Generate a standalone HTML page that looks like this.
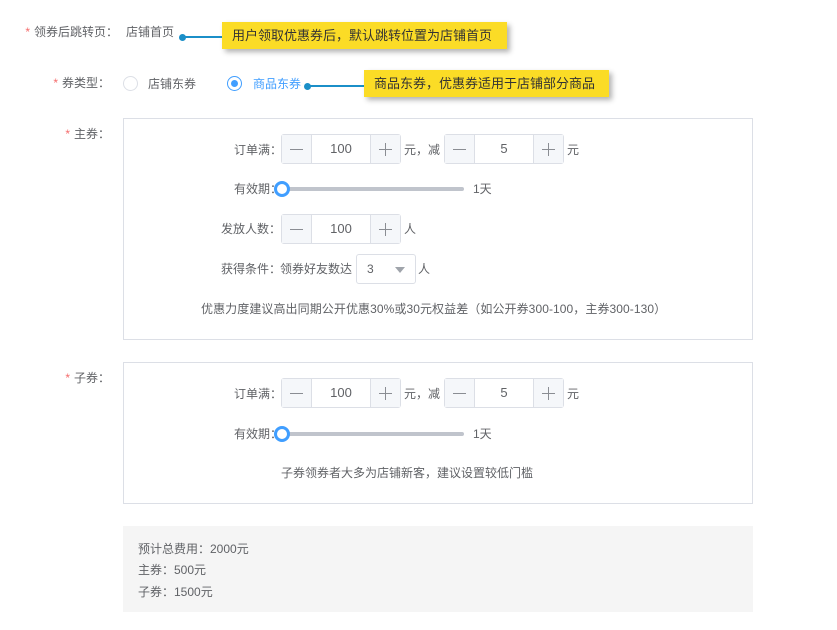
<!DOCTYPE html>
<html><head><meta charset="utf-8"><style>
*{margin:0;padding:0;box-sizing:border-box}
body{width:837px;height:630px;background:#fff;position:relative;overflow:hidden;font-family:"Liberation Sans","Noto Sans CJK SC",sans-serif;font-size:12px;color:#606266}
.a{position:absolute;white-space:nowrap;line-height:16px}
.r{text-align:right}
.s{color:#f56c6c;margin-right:4px}
.box{position:absolute;border:1px solid #dcdfe6;background:#fff}
.tip{position:absolute;background:#fbdc26;color:#333;font-size:13px;line-height:27px;padding-left:10px;box-shadow:3px 3px 5px rgba(0,0,0,.3)}
.dot{position:absolute;width:7px;height:7px;border-radius:50%;background:#1b8fc8}
.ln{position:absolute;height:2px;background:#1b8fc8}
.st{position:absolute;width:120px;height:30px;border:1px solid #dcdfe6;border-radius:3px;background:#fff}
.st .b{position:absolute;top:0;width:30px;height:28px;background:#f5f7fa}
.st .b.l{left:0;border-right:1px solid #dcdfe6}
.st .b.rr{right:0;border-left:1px solid #dcdfe6}
.st .b:before{content:"";position:absolute;left:8px;top:14px;width:13px;height:1px;background:#8a8d93}
.st .b.rr:after{content:"";position:absolute;left:14px;top:8px;width:1px;height:13px;background:#8a8d93}
.st .v{position:absolute;left:30px;right:30px;top:0;line-height:28px;text-align:center;color:#606266;font-size:13px}
.trk{position:absolute;height:4px;background:#c0c4cc;border-radius:2px}
.kn{position:absolute;width:16px;height:16px;border:3px solid #409eff;border-radius:50%;background:#fff}
</style></head><body>
<div class="a r" style="right:725px;top:24px;right:719px"><span class="s">*</span>领券后跳转页：</div>
<div class="a" style="left:126px;top:24px">店铺首页</div>
<div class="dot" style="left:179px;top:34px"></div><div class="ln" style="left:182px;top:36px;width:42px"></div>
<div class="tip" style="left:222px;top:22px;width:285px">用户领取优惠券后，默认跳转位置为店铺首页</div>

<div class="a r" style="right:727px;top:75px"><span class="s">*</span>券类型：</div>
<div style="position:absolute;left:123px;top:76px;width:15px;height:15px;border:1px solid #dcdfe6;border-radius:50%"></div>
<div class="a" style="left:148px;top:76px">店铺东券</div>
<div style="position:absolute;left:227px;top:76px;width:15px;height:15px;border:1px solid #409eff;border-radius:50%"><div style="position:absolute;left:3px;top:3px;width:7px;height:7px;border-radius:50%;background:#409eff"></div></div>
<div class="a" style="left:253px;top:76px;color:#409eff">商品东券</div>
<div class="dot" style="left:304px;top:83px"></div><div class="ln" style="left:307px;top:85px;width:58px"></div>
<div class="tip" style="left:364px;top:70px;width:245px">商品东券，优惠券适用于店铺部分商品</div>

<div class="a r" style="right:727px;top:126px"><span class="s">*</span>主券：</div>
<div class="box" style="left:123px;top:118px;width:630px;height:222px"></div>
<div class="a r" style="right:555px;top:142px">订单满：</div>
<div class="st" style="left:281px;top:134px"><div class="b l"></div><div class="v">100</div><div class="b rr"></div></div>
<div class="a" style="left:404px;top:142px">元，减</div>
<div class="st" style="left:444px;top:134px"><div class="b l"></div><div class="v">5</div><div class="b rr"></div></div>
<div class="a" style="left:567px;top:142px">元</div>
<div class="a r" style="right:555px;top:181px">有效期：</div>
<div class="trk" style="left:282px;top:187px;width:182px"></div>
<div class="kn" style="left:274px;top:181px"></div>
<div class="a" style="left:473px;top:181px">1天</div>
<div class="a r" style="right:556px;top:221px">发放人数：</div>
<div class="st" style="left:281px;top:214px"><div class="b l"></div><div class="v">100</div><div class="b rr"></div></div>
<div class="a" style="left:404px;top:221px">人</div>
<div class="a r" style="right:556px;top:261px">获得条件：</div>
<div class="a" style="left:280px;top:261px">领券好友数达</div>
<div style="position:absolute;left:356px;top:254px;width:60px;height:30px;border:1px solid #dcdfe6;border-radius:3px"><span class="a" style="left:10px;top:6px;color:#606266">3</span><span style="position:absolute;left:38px;top:12px;border-left:5px solid transparent;border-right:5px solid transparent;border-top:6px solid #a0a4ab"></span></div>
<div class="a" style="left:418px;top:261px">人</div>
<div class="a" style="left:201px;top:301px;letter-spacing:0.08px">优惠力度建议高出同期公开优惠30%或30元权益差（如公开券300-100，主券300-130）</div>

<div class="a r" style="right:727px;top:370px"><span class="s">*</span>子券：</div>
<div class="box" style="left:123px;top:362px;width:630px;height:142px"></div>
<div class="a r" style="right:555px;top:386px">订单满：</div>
<div class="st" style="left:281px;top:378px"><div class="b l"></div><div class="v">100</div><div class="b rr"></div></div>
<div class="a" style="left:404px;top:386px">元，减</div>
<div class="st" style="left:444px;top:378px"><div class="b l"></div><div class="v">5</div><div class="b rr"></div></div>
<div class="a" style="left:567px;top:386px">元</div>
<div class="a r" style="right:555px;top:426px">有效期：</div>
<div class="trk" style="left:282px;top:432px;width:182px"></div>
<div class="kn" style="left:274px;top:426px"></div>
<div class="a" style="left:473px;top:426px">1天</div>
<div class="a" style="left:281px;top:465px">子券领券者大多为店铺新客，建议设置较低门槛</div>

<div style="position:absolute;left:123px;top:526px;width:630px;height:86px;background:#f5f5f5"></div>
<div class="a" style="left:138px;top:541px">预计总费用：2000元</div>
<div class="a" style="left:138px;top:562px">主券：500元</div>
<div class="a" style="left:138px;top:584px">子券：1500元</div>
</body></html>
